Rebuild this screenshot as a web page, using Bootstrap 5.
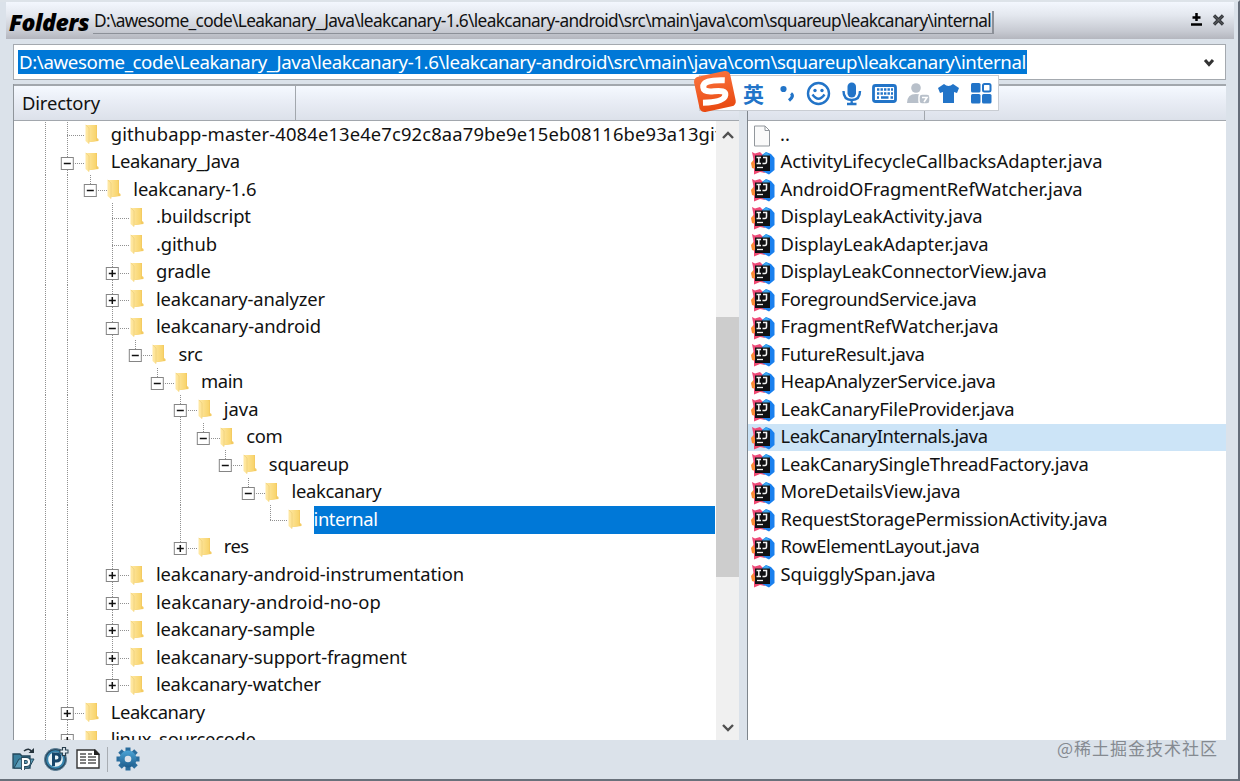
<!DOCTYPE html>
<html lang="en">
<head>
<meta charset="utf-8">
<title>Folders</title>
<link href="https://cdn.jsdelivr.net/npm/bootstrap@5.3.0/dist/css/bootstrap.min.css" rel="stylesheet">
<style>
body{width:1240px;height:781px;overflow:hidden;background:#dbe2ea;color:#111;font-family:"Noto Sans","Noto Sans CJK SC",sans-serif;font-size:18.4px;line-height:27.5px}
svg{display:block;flex:none;overflow:visible}
.win{width:1240px;height:781px;border-right:2px solid #646c78;border-bottom:2px solid #69717b;border-top:2px solid #dde3e9;padding-left:6px}
.caption{height:37px;margin-right:4px;background:linear-gradient(#f3f7fe,#e4e8ef 35%,#c6c9d1 80%,#b4b6be);padding:0 10px 0 3px}
.caption-name{font:italic 800 23px/30px "Open Sans",sans-serif;color:#000;width:82px;padding-top:3px}
.caption-path{height:23px;line-height:20px;border-right:2px solid #8c9098;border-bottom:1px solid #8c9098;width:901px;margin:4px 0 0 2px;padding-left:1px;font-size:17.3px}
.addr{height:36px;margin:5px 12px 5px 7px;background:#fff;border:1px solid #a4a9af;padding:0 11px 0 4px}
.addr-sel{background:#0078d7;color:#fff;height:24px;line-height:24px;width:1009px;padding-left:1px;font-size:18.7px}
.panes{height:656px;margin:-1px 12px 0 7px}
.pane-l{width:726px;border-left:1px solid #8f959b}
.pane-r{width:479px;border-left:1px solid #7e858c;margin-left:8px}
.head{height:37px;background:linear-gradient(#f5f9ff,#e9edf5 45%,#dce1ea);border-top:2px solid #a2a7ad;border-bottom:1px solid #a2a7ad}
.head div{border-right:1px solid #a2a7ad;line-height:34px}
.list-area{height:619px;background:#fff;overflow:hidden}
.trow{height:27.52px;line-height:26px}
.guide{width:22.6px;height:27.52px}
.tlabel{margin-left:12px}
.picked{background:#0078d7;color:#fff;margin:2px 0 0 11.500px;height:27.5px;line-height:25px}
.bar-v{width:23px;background:#f0f0f0}
.thumb{height:260px;background:#cdcdcd}
.frow{height:27.52px;line-height:24px;padding-left:3px}
.frow span{margin-top:-2px}
.frow.on{background:#cce4f7}
.tools{height:38px;padding-left:6px}
.ime{left:699px;top:75px;width:300px;height:36px;background:#fff;border:1px solid #c9cdd3;color:#2274c8}
.logo{left:693px;top:71px}
.mk{left:1057px;top:734px;font:400 17px/27px "Noto Sans CJK SC",sans-serif;color:#858a91}
</style>
</head>
<body>
<svg width="0" height="0" class="position-absolute">
<defs>
<linearGradient id="fg" x2="1"><stop offset="0" stop-color="#ffe9a6"/><stop offset="1" stop-color="#f8d46c"/></linearGradient>
<linearGradient id="og" y2="1" x2="0"><stop offset="0" stop-color="#f9703a"/><stop offset="1" stop-color="#e94a12"/></linearGradient>
<linearGradient id="bg" y2="1" x2="0"><stop offset="0" stop-color="#4ba4d6"/><stop offset="1" stop-color="#1d5c8c"/></linearGradient>
<symbol id="folder" viewBox="0 0 14 20"><path d="M5 1H12V14L13.500 15V17L5 18Z" fill="#f4cb63"/><path d="M0.500 1H10L11 2V17L4 18V20L.5 17Z" fill="url(#fg)"/><path d="M.8 1L4 4V19.500" fill="none" stroke="#efd07c" stroke-width=".8"/></symbol>
<symbol id="ij" viewBox="0 0 24 24"><path d="M0 12L4 7V18L1 17Z" fill="#fc8c35"/><path d="M1 1L4 2.500L9 1L13 5L8 13L5 15L3 11Z" fill="#ee4a78"/><path d="M3 17L12 15L14 22L9 21L3 23.500Z" fill="#ef4a72"/><path d="M11 4L15 1L20 3L23.500 7V19L18 23.500L11 20Z" fill="#1a80ee"/><path d="M12 4L15.500 1L19 5H12Z" fill="#3ba9ee"/><rect x="4" y="4.500" width="15" height="15.500" fill="#101012"/><path d="M5.500 6.500H10M7.800 6.500V12.500M5.500 12.500H10M12 6.500H15.500V10.500Q15.500 12.500 14 12.500H11.500" fill="none" stroke="#f2f2f2" stroke-width="1.500"/><path d="M6 16.500H12" stroke="#eee" stroke-width="1.300"/></symbol>
</defs>
</svg>

<main class="win d-flex flex-column">
  <header class="caption d-flex align-items-center">
    <span class="caption-name" data-w="80">Folders</span>
    <div class="caption-path text-nowrap"><span data-w="897">D:\awesome_code\Leakanary_Java\leakcanary-1.6\leakcanary-android\src\main\java\com\squareup\leakcanary\internal</span></div>
    <div class="d-flex ms-auto gap-2 align-items-center pb-1">
      <svg width="12" height="14" fill="none" stroke="#000" stroke-width="2.500" style="margin-right:-1px"><path d="M2 12.500H13M7.500 1V9M3.500 5.500H11.500" /></svg>
      <svg width="12" height="12" fill="none" stroke="#34373c" style="margin:3px 0 0 4px"><path d="M2 1.500L11 10.500M11 1.500L2 10.500" stroke-width="3.200"/><path d="M2 1.500L11 10.500M11 1.500L2 10.500" stroke="#888" stroke-width=".6"/></svg>
    </div>
  </header>

  <div class="addr d-flex align-items-center">
    <div class="addr-sel text-nowrap"><span data-w="1007">D:\awesome_code\Leakanary_Java\leakcanary-1.6\leakcanary-android\src\main\java\com\squareup\leakcanary\internal</span></div>
    <svg class="ms-auto" width="10" height="8" style="margin-top:2px"><path d="M1 1L5 5.500L9 1" fill="none" stroke="#333" stroke-width="3"/></svg>
  </div>

  <div class="panes d-flex">
    <section class="pane-l">
      <div class="head d-flex"><div style="width:282px" class="ps-2"><span data-w="78">Directory</span></div></div>
      <div class="d-flex">
        <div class="list-area flex-grow-1"><div id="tree"></div></div>
        <div class="bar-v d-flex flex-column">
          <svg width="23" height="14" class="mt-2"><path d="M7 9L12 4L17 9" fill="none" stroke="#505050" stroke-width="2.400"/></svg>
          <div class="thumb" style="margin-top:174px"></div>
          <svg width="23" height="14" class="mt-auto mb-1"><path d="M7 3L12 8L17 3" fill="none" stroke="#505050" stroke-width="2.400"/></svg>
        </div>
      </div>
    </section>
    <section class="pane-r">
      <div class="head d-flex"><div style="width:177px"></div></div>
      <div class="list-area" id="files"></div>
    </section>
  </div>

  <footer class="tools d-flex align-items-center">
    <svg width="24" height="24"><path d="M1 7H8L10 9H18V21H1Z" fill="#3a7f9d" stroke="#24485c" stroke-width="1.300"/><path d="M2 21L7 12H22L17 21Z" fill="#5d9fbb" stroke="#24485c"/><path d="M12 4Q17 0 20 5" fill="none" stroke="#26333c" stroke-width="1.600"/><path d="M16.500 6H22V1Z" fill="#26333c"/><path d="M11 23V12H14Q17 12 17 15Q17 18 14 18H11" fill="none" stroke="#24485c" stroke-width="4"/><path d="M11 23V12H14Q17 12 17 15Q17 18 14 18H11" fill="none" stroke="#fff" stroke-width="2.200"/></svg>
    <svg width="26" height="24" class="ms-2"><circle cx="11.500" cy="12.500" r="11" fill="#284a62" stroke="#5b7e94"/><circle cx="11.500" cy="12.500" r="8.300" fill="#e9f3f7" stroke="#3684ad" stroke-width="2"/><path d="M9.500 19V7H12.500Q16 7 16 10.500Q16 14 12.500 14H9.500" fill="none" stroke="#17466a" stroke-width="3"/><path d="M20 0V9M15.500 4.500H24.500" stroke="#29404f" stroke-width="4.200"/><path d="M20 1V8M16.500 4.500H23.500" stroke="#e4edf3" stroke-width="1.800"/></svg>
    <svg width="24" height="20" style="margin-left:6px"><path d="M1 1H19L23 5V19H1Z" fill="#fff" stroke="#333" stroke-width="1.400"/><path d="M18 0L24 6H18Z" fill="#222"/><path d="M4 5H10M4 8H10M4 11H10M4 14H10M12 5H16M12 8H20M12 11H20M12 14H20" stroke="#555" stroke-width="1.300"/></svg>
    <div class="vr" style="height:25px;align-self:center;margin:0 8px 0 7px"></div>
    <svg width="24" height="24" viewBox="-12 -12 24 24"><g stroke="#2a6d9d" stroke-width="5"><path d="M0-11.500V11.500M-11.500 0H11.500M-8-8L8 8M8-8L-8 8"/></g><circle r="8.500" fill="url(#bg)"/><circle r="3.300" fill="#dbe2ea"/></svg>
  </footer>
</main>

<div class="ime position-absolute"></div>
<div class="position-absolute d-flex align-items-center" style="left:743px;top:76px;height:34px">
  <span style="font:700 21px/34px 'Noto Sans CJK SC',sans-serif;color:#2274c8;width:36px">英</span>
  <svg width="252" height="34" fill="none" stroke="#2274c8" stroke-width="2.400">
    <circle cx="4.500" cy="13" r="3.100" fill="#2274c8" stroke="none"/><path d="M12 17.500Q15.500 20 10 24.500" stroke-width="3.200"/>
    <circle cx="39.500" cy="17.500" r="10.500"/><circle cx="36" cy="14.500" r="1.700" fill="#2274c8" stroke="none"/><circle cx="43" cy="14.500" r="1.700" fill="#2274c8" stroke="none"/><path d="M33.500 18.500Q39.500 27 45.500 18.500"/>
    <rect x="68.500" y="6.500" width="8.500" height="15" rx="4.200" fill="#2274c8" stroke="none"/><path d="M64.500 15Q64.500 24 72.700 24Q81 24 81 15M72.700 24V28M68 28H77.500"/>
    <rect x="94.500" y="9.500" width="22" height="16" rx="2" stroke-width="2.800"/><path d="M98 13.500H114M98 17.500H114" stroke-dasharray="2.400 1.100"/><path d="M98 21.500H100M102 21.500H109.500M111.500 21.500H114"/>
    <g fill="#b8c0ca" stroke="none"><circle cx="137" cy="12" r="4.800"/><path d="M128 27Q128 18 137 18Q147 18 147 27Z"/></g><rect x="140" y="18" width="11" height="10" rx="3" fill="#b8c0ca" stroke="#fff" stroke-width="1.500"/><path d="M143 21.500H148L145 26" stroke="#fff" stroke-width="1.600"/>
    <path d="M165 8Q169.500 12 174 8L180 12L178 17L175 16V27H164V16L161 17L159 12Z" fill="#2274c8" stroke="none"/>
    <g fill="#2274c8" stroke="none"><rect x="192" y="7" width="9.500" height="9.500" rx="1.500"/><rect x="192" y="18" width="9.500" height="9.500" rx="1.500"/><rect x="203" y="18" width="9.500" height="9.500" rx="1.500"/></g><rect x="204" y="8" width="7.500" height="7.500" rx="1.500" stroke-width="2"/>
  </svg>
</div>
<svg class="logo position-absolute" width="44" height="42"><g transform="rotate(-12 22 21)"><rect x="3.500" y="2.500" width="37" height="36" rx="5" fill="url(#og)"/><path d="M34 11.500Q12 6 11.500 14Q11 19 21 20Q33 21 31.500 26Q29 33 8 29" fill="none" stroke="#fff" stroke-width="6"/></g></svg>
<div class="mk position-absolute text-nowrap"><span data-w="161">@稀土掘金技术社区</span></div>

<script>
// [ancestor guides, elbow, expander, label, label width]
const tree=[
["|","t","","githubapp-master-4084e13e4e7c92c8aa79be9e15eb08116be93a13git",611],
["|","t","-","Leakanary_Java",129],
["||","l","-","leakcanary-1.6",123],
["|| ","t","",".buildscript",95],
["|| ","t","",".github",61],
["|| ","t","+","gradle",55],
["|| ","t","+","leakcanary-analyzer",169],
["|| ","t","-","leakcanary-android",165],
["|| |","l","-","src",24],
["|| | ","l","-","main",42],
["|| |  ","t","-","java",35],
["|| |  |","l","-","com",36],
["|| |  | ","l","-","squareup",80],
["|| |  |  ","l","-","leakcanary",90],
["|| |  |   ","l","","internal",64],
["|| |  ","l","+","res",25],
["|| ","t","+","leakcanary-android-instrumentation",308],
["|| ","t","+","leakcanary-android-no-op",225],
["|| ","t","+","leakcanary-sample",159],
["|| ","t","+","leakcanary-support-fragment",251],
["|| ","l","+","leakcanary-watcher",165],
["|","t","+","Leakcanary",94],
["|","t","+","linux_sourcecode",145]];
const X=11.3,Y=15.5,dash='stroke="#909090" stroke-dasharray="1 1" shape-rendering="crispEdges"';
const cell=b=>`<svg class="guide">${b}</svg>`;
document.getElementById("tree").innerHTML=tree.map(([g,e,x,t,w])=>{
  const anc=[...g].map(c=>cell(c=="|"?`<path d="M${X} 0V28" ${dash}/>`:"")).join("");
  const box=x?`<rect x="${X-6}" y="${Y-6}" width="12" height="12" fill="#fff" stroke="#858585"/><path d="M${X-3.5} ${Y}h7${x=="+"?`M${X} ${Y-3.5}v7`:""}" stroke="#111" stroke-width="1.500"/>`:"";
  const elbow=cell(`<path d="M${X} 0V${e=="t"?28:Y}M${X} ${Y}H28" fill="none" ${dash}/>${box}`);
  const sel=t=="internal";
  return `<div class="trow d-flex align-items-center text-nowrap">${anc}${elbow}<svg width="14" height="20" style="margin:1px 0 0 6px"><use href="#folder"/></svg><div class="${sel?"picked flex-grow-1":"tlabel"}"><span data-w="${w}">${t}</span></div></div>`;
}).join("");
document.getElementById("tree").style.margin="-1px 1px 0 19.500px";

const files=[["ActivityLifecycleCallbacksAdapter",322],["AndroidOFragmentRefWatcher",302],["DisplayLeakActivity",202],["DisplayLeakAdapter",208],["DisplayLeakConnectorView",266],["ForegroundService",196],["FragmentRefWatcher",218],["FutureResult",144],["HeapAnalyzerService",215],["LeakCanaryFileProvider",234],["LeakCanaryInternals",207],["LeakCanarySingleThreadFactory",308],["MoreDetailsView",180],["RequestStoragePermissionActivity",327],["RowElementLayout",199],["SquigglySpan",155]];
document.getElementById("files").innerHTML=
 `<div class="frow d-flex align-items-center"><svg width="18" height="22" style="margin:2px 9px 0 2px"><path d="M1.500 1H12L16.500 5.500V21H1.500ZM12 1V5.500H16.500" fill="#fafafa" stroke="#92979c"/></svg><span>..</span></div>`+
 files.map(([n,w])=>`<div class="frow d-flex align-items-center text-nowrap${n=="LeakCanaryInternals"?" on":""}"><svg width="24" height="24" style="margin:1px 5.500px 0 0"><use href="#ij"/></svg><span data-w="${w}">${n}.java</span></div>`).join("");

// spread each label over its width
document.querySelectorAll("[data-w]").forEach(s=>{
  const r=document.createRange();r.selectNodeContents(s);
  s.style.letterSpacing=((s.dataset.w-r.getBoundingClientRect().width)/s.textContent.length)+"px";
});
</script>
<script src="https://cdn.jsdelivr.net/npm/bootstrap@5.3.0/dist/js/bootstrap.bundle.min.js"></script>
</body>
</html>
